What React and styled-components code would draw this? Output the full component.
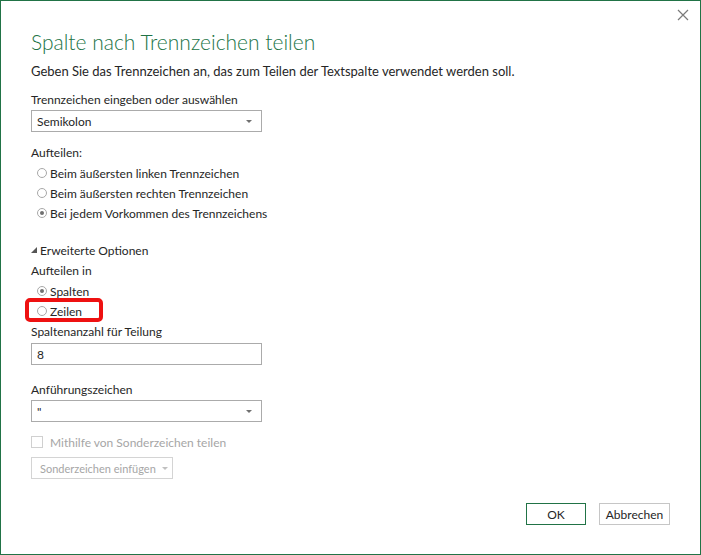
import React from "react";
import styled, { createGlobalStyle } from "styled-components";

const GlobalStyle = createGlobalStyle`
  html, body {
    margin: 0;
    padding: 0;
    background: #ffffff;
  }
  body {
    font-family: "Lato", "Open Sans", sans-serif;
    color: #262626;
  }
`;

const Dialog = styled.div`
  position: relative;
  box-sizing: border-box;
  width: 701px;
  height: 555px;
  border: 1px solid #217346;
  padding: 0 30px;
  display: flex;
  flex-direction: column;
  background: #fff;
`;

const CloseButton = styled.button`
  position: absolute;
  top: 7px;
  right: 10px;
  width: 14px;
  height: 14px;
  padding: 0;
  border: 0;
  background: transparent;
  display: flex;
  align-items: center;
  justify-content: center;
`;

const Title = styled.h1`
  margin: 27px 0 0;
  font-size: 21px;
  font-weight: 300;
  line-height: 28px;
  color: #217346;
`;

const Subtitle = styled.p`
  margin: 5px 0 0;
  font-size: 13px;
  line-height: 20px;
`;

const Label = styled.div`
  margin-top: ${p => p.$top || 0}px;
  font-size: 12px;
  line-height: ${p => p.$lh || 18}px;
  color: #262626;
`;

const Field = styled.div`
  box-sizing: border-box;
  width: 231px;
  height: 22px;
  margin-top: ${p => p.$top || 0}px;
  border: 1px solid #ababab;
  padding: 0 5px;
  display: flex;
  align-items: center;
  justify-content: space-between;
  font-size: 12px;
  color: #262626;
`;

const Arrow = styled.span`
  width: 0;
  height: 0;
  margin-right: 4px;
  border-left: 3px solid transparent;
  border-right: 3px solid transparent;
  border-top: 3px solid ${p => p.$color || "#707070"};
`;

const RadioList = styled.div`
  display: flex;
  flex-direction: column;
`;

const RadioRow = styled.label`
  position: relative;
  display: flex;
  align-items: center;
  height: 20px;
  padding-left: 6px;
  font-size: 12px;
  gap: 3px;

  ${p =>
    p.$marked &&
    `
    &::after {
      content: "";
      position: absolute;
      left: -6px;
      top: -3px;
      width: 78px;
      height: 24px;
      box-sizing: border-box;
      border: 4px solid #ee1111;
      border-radius: 5px;
    }
  `}
`;

const RadioDot = styled.span`
  box-sizing: border-box;
  width: 10px;
  height: 10px;
  border-radius: 50%;
  border: 1px solid #a8a8a8;
  background: #fff;
  display: flex;
  align-items: center;
  justify-content: center;

  &::after {
    content: "";
    width: 4px;
    height: 4px;
    border-radius: 50%;
    background: ${p => (p.$checked ? "#707070" : "transparent")};
  }
`;

const Expander = styled.div`
  display: flex;
  align-items: center;
  gap: 3px;
  margin-top: 17px;
  height: 20px;
  font-size: 12px;
`;

const CheckRow = styled.div`
  display: flex;
  align-items: center;
  gap: 7px;
  height: 20px;
  margin-top: 10px;
  font-size: 12px;
  color: #a6a6a6;
`;

const CheckBox = styled.span`
  box-sizing: border-box;
  width: 12px;
  height: 12px;
  border: 1px solid #d0d0d0;
`;

const DisabledButton = styled.div`
  box-sizing: border-box;
  width: 142px;
  height: 22px;
  margin-top: 5px;
  border: 1px solid #d4d4d4;
  display: flex;
  align-items: center;
  gap: 6px;
  padding-left: 8px;
  white-space: nowrap;
  font-size: 11px;
  color: #a6a6a6;
`;

const Footer = styled.div`
  margin-top: 24px;
  display: flex;
  justify-content: flex-end;
  gap: 13px;
`;

const Button = styled.button`
  box-sizing: border-box;
  width: ${p => p.$w}px;
  height: 22px;
  padding: 0;
  background: #fff;
  border: 1px solid ${p => (p.$primary ? "#217346" : "#c6c6c6")};
  font-family: inherit;
  font-size: 12px;
  color: #262626;
`;

function Radio({ checked, marked, children }) {
  return (
    <RadioRow $marked={marked}>
      <RadioDot $checked={checked} />
      {children}
    </RadioRow>
  );
}

export default function App() {
  return (
    <>
      <GlobalStyle />
      <Dialog>
        <CloseButton aria-label="Schließen">
          <svg width="12" height="12" viewBox="0 0 12 12">
            <path d="M1 1L11 11M11 1L1 11" stroke="#7a7a7a" strokeWidth="1.2" />
          </svg>
        </CloseButton>
        <Title>Spalte nach Trennzeichen teilen</Title>
        <Subtitle>
          Geben Sie das Trennzeichen an, das zum Teilen der Textspalte verwendet werden soll.
        </Subtitle>

        <Label $top={10}>Trennzeichen eingeben oder auswählen</Label>
        <Field $top={1}>
          Semikolon
          <Arrow />
        </Field>

        <Label $top={11} $lh={20}>Aufteilen:</Label>
        <RadioList>
          <Radio>Beim äußersten linken Trennzeichen</Radio>
          <Radio>Beim äußersten rechten Trennzeichen</Radio>
          <Radio checked>Bei jedem Vorkommen des Trennzeichens</Radio>
        </RadioList>

        <Expander>
          <svg width="6" height="6" viewBox="0 0 6 6">
            <path d="M6 0V6H0Z" fill="#555" />
          </svg>
          Erweiterte Optionen
        </Expander>
        <Label $top={1} $lh={20}>Aufteilen in</Label>
        <RadioList>
          <Radio checked>Spalten</Radio>
          <Radio marked>Zeilen</Radio>
        </RadioList>

        <Label $top={2}>Spaltenanzahl für Teilung</Label>
        <Field $top={2}>8</Field>

        <Label $top={16}>Anführungszeichen</Label>
        <Field $top={1}>
          "
          <Arrow />
        </Field>

        <CheckRow>
          <CheckBox />
          Mithilfe von Sonderzeichen teilen
        </CheckRow>
        <DisabledButton>
          Sonderzeichen einfügen
          <Arrow $color="#c0c0c0" />
        </DisabledButton>

        <Footer>
          <Button $primary $w={60}>OK</Button>
          <Button $w={71}>Abbrechen</Button>
        </Footer>
      </Dialog>
    </>
  );
}
